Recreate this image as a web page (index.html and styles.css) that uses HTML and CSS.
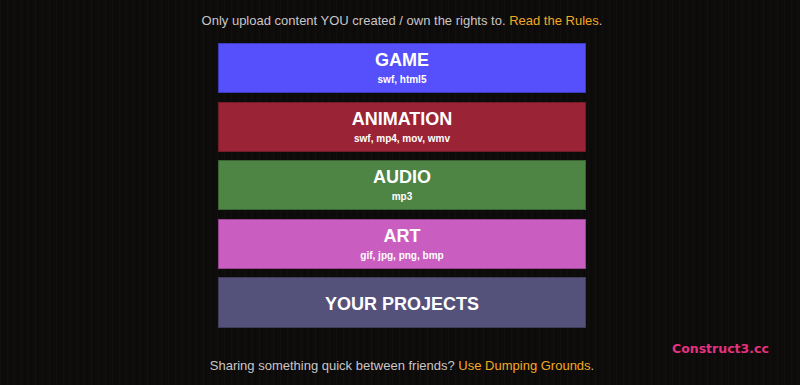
FILE: index.html
```html
<!DOCTYPE html>
<html>
<head>
  <title>Upload</title>
  <link rel="stylesheet" href="styles.css">
</head>
<body>

<div class="page">
  <p class="note">Only upload content YOU created / own the rights to. <a href="#">Read the Rules</a>.</p>

  <div class="types">
    <a href="#" class="type game">
      <span class="name">GAME</span>
      <span class="ext">swf, html5</span>
    </a>
    <a href="#" class="type anim">
      <span class="name">ANIMATION</span>
      <span class="ext">swf, mp4, mov, wmv</span>
    </a>
    <a href="#" class="type audio">
      <span class="name">AUDIO</span>
      <span class="ext">mp3</span>
    </a>
    <a href="#" class="type art">
      <span class="name">ART</span>
      <span class="ext">gif, jpg, png, bmp</span>
    </a>
    <a href="#" class="type projects">
      <span class="name">YOUR PROJECTS</span>
    </a>
  </div>

  <p class="note bottom">Sharing something quick between friends? <a href="#">Use Dumping Grounds</a>.</p>
</div>

<div class="mark">Construct3.cc</div>

</body>
</html>
```

FILE: styles.css
```css
body {
  margin: 0;
  height: 385px;
  background-color: #0e0b0b;
  background-image: repeating-linear-gradient(90deg, rgba(255,255,255,0.015) 0 1px, transparent 1px 3px, rgba(0,0,0,0.2) 3px 4px, transparent 4px 7px);
  font-family: "Liberation Sans", Arial, sans-serif;
  color: #c9c6c6;
  overflow: hidden;
}
.page { display: flex; flex-direction: column; align-items: center; padding-left: 4px; }
.note { margin: 13px 0 0; font-size: 13px; line-height: 16px; }
.note a { color: #f2a922; text-decoration: none; }
.note.bottom { margin-top: 30px; }

.types { display: flex; flex-direction: column; gap: 8.5px; margin-top: 14px; }
.type {
  width: 368px; height: 50px; box-sizing: border-box;
  display: flex; flex-direction: column; align-items: center; justify-content: center;
  color: #fff; text-decoration: none; font-weight: bold;
  border: 1px solid rgba(0,0,0,0.25);
}
.name { font-size: 18px; line-height: 20px; }
.ext { font-size: 10px; line-height: 12px; margin-top: 4px; }
.game { background: #5550fb; }
.anim { background: #9a2436; }
.audio { background: #4e8444; }
.art { background: #c95ec0; }
.projects { background: #54517b; height: 51px; }
.projects .name { margin-top: 2px; }

.mark {
  position: absolute; left: 672px; top: 341px;
  font-family: "DejaVu Sans", sans-serif; font-size: 12.5px; font-weight: bold;
  color: #e5327f;
}
```
